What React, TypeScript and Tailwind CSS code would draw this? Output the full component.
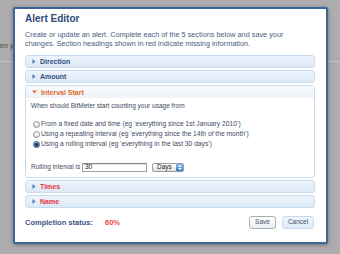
import React from "react";

const font = { fontFamily: '"Liberation Sans", Arial, sans-serif' };

const Arrow = ({ down = false, color = "#4d7db3" }: { down?: boolean; color?: string }) =>
  down ? (
    <svg width="5" height="4" viewBox="0 0 5 4" className="shrink-0">
      <polygon points="0,0.5 5,0.5 2.5,3.5" fill={color} />
    </svg>
  ) : (
    <svg width="4" height="5" viewBox="0 0 4 5" className="shrink-0">
      <polygon points="0.5,0 3.5,2.5 0.5,5" fill={color} />
    </svg>
  );

const Section = ({ title, missing = false }: { title: string; missing?: boolean }) => (
  <div className="h-[13px] flex items-center gap-[4px] pl-[6px] rounded-[3px] border border-[#c8dbef] bg-gradient-to-b from-[#edf4fc] to-[#dde9f7]">
    <Arrow />
    <span className={`text-[7px] font-bold leading-none ${missing ? "text-[#e8343a]" : "text-[#34507c]"}`}>
      {title}
    </span>
  </div>
);

const Radio = ({ checked = false, label }: { checked?: boolean; label: string }) => (
  <div className="h-[10px] flex items-center gap-[1px] ml-[2px]">
    {checked ? (
      <span className="w-[7px] h-[7px] rounded-full border border-[#2f4f7a] bg-gradient-to-b from-[#9cc0ea] to-[#3f78c0] flex items-center justify-center">
        <span className="w-[3px] h-[3px] rounded-full bg-[#13243d]" />
      </span>
    ) : (
      <span className="w-[7px] h-[7px] rounded-full border border-[#8c8c8c] bg-gradient-to-b from-white to-[#dcdcdc]" />
    )}
    <span className="text-[6.7px] leading-none text-[#3e4a5c]">{label}</span>
  </div>
);

export default function App() {
  return (
    <div className="relative w-[340px] h-[254px] overflow-hidden bg-[#adadad]" style={font}>
      {/* page behind the modal */}
      <div className="pt-[41px]">
        <p className="text-[7px] leading-[9px] text-[#4a4a4a] whitespace-nowrap">en y</p>
        <div className="mt-[11px] h-px bg-[#c2c2c2]" />
      </div>

      {/* modal */}
      <div className="absolute left-[13px] top-[7px] w-[315px] h-[237px] bg-white border-2 border-[#3a6797] rounded-[2px] shadow-[0_1px_4px_rgba(0,0,0,0.35)] pl-[10px] pr-[11px] pt-[4px]">
        <h1 className="text-[10px] leading-[12px] font-bold text-[#2d4a78]">Alert Editor</h1>
        <p className="mt-[5px] text-[7.3px] leading-[9px] text-[#4b5c7e] whitespace-nowrap">
          Create or update an alert. Complete each of the 5 sections below and save your
          <br />
          changes. Section headings shown in red indicate missing information.
        </p>

        <div className="mt-[7px] flex flex-col gap-[2px]">
          <Section title="Direction" />
          <Section title="Amount" />

          <div className="h-[93px] rounded-[3px] border border-[#c8dbef] bg-white">
            <div className="h-[12px] flex items-center gap-[4px] pl-[6px] bg-gradient-to-b from-[#f7fafd] to-[#eef4fb]">
              <Arrow down color="#e0762e" />
              <span className="text-[7px] font-bold leading-none text-[#dd6c2a]">Interval Start</span>
            </div>
            <div className="pl-[5px] pt-[4px]">
              <p className="h-[9px] flex items-center text-[6.5px] leading-none text-[#3e4a5c]">
                When should BitMeter start counting your usage from
              </p>
              <div className="mt-[8px] flex flex-col">
                <Radio label="From a fixed date and time (eg ‘everything since 1st January 2010’)" />
                <Radio label="Using a repeating interval (eg ‘everything since the 14th of the month’)" />
                <Radio checked label="Using a rolling interval (eg ‘everything in the last 30 days’)" />
              </div>
              <div className="mt-[13px] h-[10px] flex items-center">
                <span className="text-[6.5px] leading-none text-[#3e4a5c] w-[51px]">Rolling interval is</span>
                <div className="w-[65px] h-[9px] border border-[#a3a3a3] border-t-[#8a8a8a] bg-white flex items-center pl-[2px] shadow-[inset_0_1px_1px_rgba(0,0,0,0.12)]">
                  <span className="text-[6.5px] leading-none text-[#222]">30</span>
                </div>
                <div className="ml-[5px] w-[32px] h-[9px] rounded-[2px] border border-[#9a9a9a] bg-gradient-to-b from-white to-[#e3e3e3] flex items-stretch overflow-hidden">
                  <span className="flex-1 flex items-center pl-[4px] text-[6.5px] leading-none text-[#222]">Days</span>
                  <span className="w-[7px] bg-gradient-to-b from-[#8bb8ee] to-[#3a78cf] flex flex-col items-center justify-center gap-[1px]">
                    <svg width="4" height="2" viewBox="0 0 4 2"><polygon points="0,2 4,2 2,0" fill="#fff" /></svg>
                    <svg width="4" height="2" viewBox="0 0 4 2"><polygon points="0,0 4,0 2,2" fill="#fff" /></svg>
                  </span>
                </div>
              </div>
            </div>
          </div>

          <Section title="Times" missing />
          <Section title="Name" missing />
        </div>

        <div className="mt-[8px] flex items-center">
          <span className="text-[7.5px] font-bold leading-none text-[#3a5683] w-[80px]">Completion status:</span>
          <span className="text-[7.5px] font-bold leading-none text-[#f04a44]">60%</span>
          <div className="ml-auto flex gap-[6px] mr-[1px]">
            <button className="w-[27px] h-[13px] rounded-[3px] border border-[#a7adb5] bg-gradient-to-b from-white to-[#e8edf3] text-[6.5px] leading-none text-[#44505f]">
              Save
            </button>
            <button className="w-[32px] h-[13px] rounded-[3px] border border-[#cadcef] bg-gradient-to-b from-[#eef5fd] to-[#e0ebf8] text-[6.5px] leading-none text-[#44505f]">
              Cancel
            </button>
          </div>
        </div>
      </div>
    </div>
  );
}
